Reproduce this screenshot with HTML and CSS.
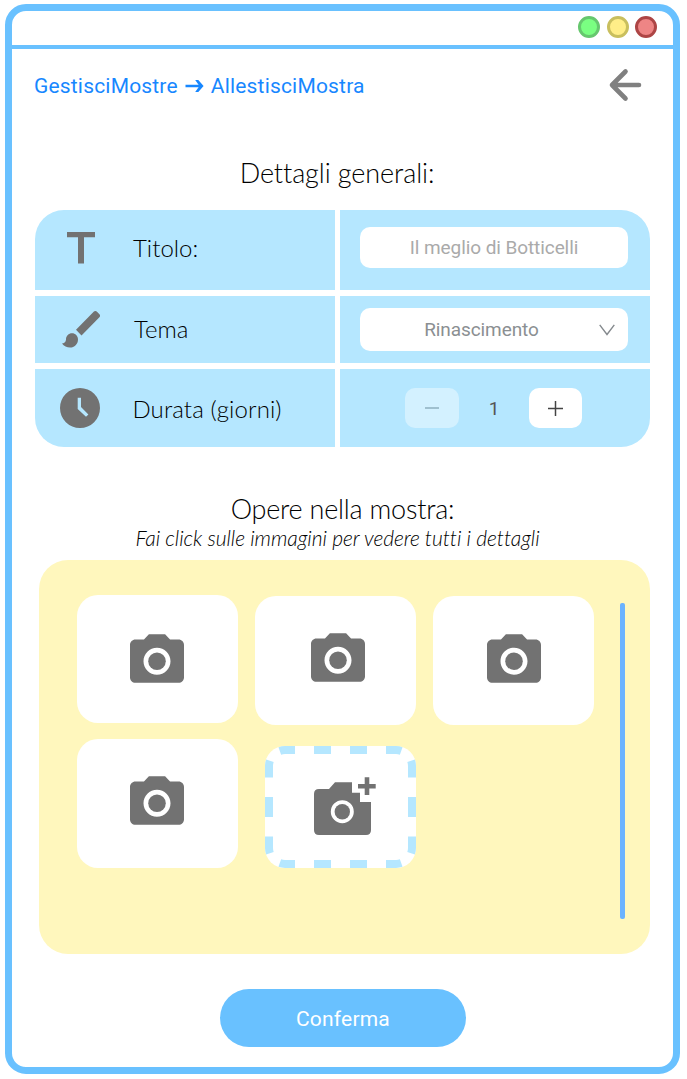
FILE: index.html
```html
<!DOCTYPE html>
<html lang="it">
<head>
<meta charset="utf-8">
<title>AllestisciMostra</title>
<link rel="stylesheet" href="styles.css">
</head>
<body>
<svg class="defs" width="0" height="0">
  <symbol id="camera" viewBox="2 2 20 18"><path fill-rule="evenodd" d="M9 2L7.17 4H4c-1.1 0-2 .9-2 2v12c0 1.1.9 2 2 2h16c1.1 0 2-.9 2-2V6c0-1.1-.9-2-2-2h-3.17L15 2H9zm3 15c-2.76 0-5-2.24-5-5s2.24-5 5-5 5 2.24 5 5-2.24 5-5 5z"/><circle cx="12" cy="12" r="3.25"/></symbol>
</svg>
<div class="window">
  <header class="titlebar">
    <span class="dot green"></span><span class="dot yellow"></span><span class="dot red"></span>
  </header>
  <main class="content">
    <nav class="topnav">
      <div class="crumbs">
        <a>GestisciMostre</a>
        <svg class="crumb-arrow" width="19" height="14" viewBox="0 0 19 14"><path d="M0.5 7H16" fill="none" stroke="currentColor" stroke-width="2.4"/><path d="M10.2 1H13.3L18.6 7L13.3 13H10.2L14.4 7z" fill="currentColor"/></svg>
        <a>AllestisciMostra</a>
      </div>
      <svg class="back" width="34" height="34" viewBox="0 0 34 34"><path d="M31 17H4M17.5 3.5L4 17L17.5 30.5" fill="none" stroke="#808080" stroke-width="4.6" stroke-linecap="round" stroke-linejoin="round"/></svg>
    </nav>
    <h1 class="heading general">Dettagli generali:</h1>
    <section class="details">
      <div class="cell label">
        <svg class="icon icon-title" width="28" height="32" viewBox="0 0 28 32"><path d="M0 0H28V5.3H17V31.5H11V5.3H0z"/></svg>
        <span class="name name-title">Titolo:</span>
      </div>
      <div class="cell first"><div class="field input">Il meglio di Botticelli</div></div>
      <div class="cell label">
        <svg class="icon icon-brush" width="38" height="37" viewBox="2 3 19 18.2" preserveAspectRatio="none"><path d="M7 14c-1.66 0-3 1.34-3 3 0 1.31-1.16 2-2 2 .92 1.22 2.49 2 4 2 2.21 0 4-1.79 4-4 0-1.66-1.34-3-3-3zm13.71-9.37l-1.34-1.34c-.39-.39-1.02-.39-1.41 0L9 12.25 11.75 15l8.96-8.96c.39-.39.39-1.02 0-1.41z"/></svg>
        <span class="name name-theme">Tema</span>
      </div>
      <div class="cell"><div class="field select"><span>Rinascimento</span>
        <svg class="chevron" width="16" height="12" viewBox="0 0 16 12"><path d="M0.7 0.8L8 10.5L15.3 0.8" fill="none" stroke="#858a8e" stroke-width="1.4"/></svg></div></div>
      <div class="cell label">
        <svg class="icon icon-clock" width="40" height="40" viewBox="0 0 40 40"><path fill-rule="evenodd" d="M20 0a20 20 0 1 0 0 40a20 20 0 1 0 0-40zM17.7 9.7H21V19L28.4 26.4L26 28.8L17.7 21z"/></svg>
        <span class="name name-days">Durata (giorni)</span>
      </div>
      <div class="cell stepper">
        <div class="step minus"><svg width="14" height="2"><path d="M0 1H14" stroke="#93b4c3" stroke-width="1.6"/></svg></div>
        <span class="count">1</span>
        <div class="step plus"><svg width="15" height="15"><path d="M0 7.5H15M7.5 0V15" stroke="#444" stroke-width="1.5"/></svg></div>
      </div>
    </section>
    <h2 class="heading works">Opere nella mostra:</h2>
    <p class="hint">Fai click sulle immagini per vedere tutti i dettagli</p>
    <section class="gallery">
      <div class="grid">
        <div class="card c1"><svg class="cam"><use href="#camera"/></svg></div>
        <div class="card c2"><svg class="cam"><use href="#camera"/></svg></div>
        <div class="card c3"><svg class="cam"><use href="#camera"/></svg></div>
        <div class="card c4"><svg class="cam"><use href="#camera"/></svg></div>
        <div class="add">
          <svg width="151" height="122" viewBox="0 0 151 122">
            <g fill="none" stroke="#b5e7ff" stroke-width="8">
              <path d="M14.8 4.9A16 16 0 0 1 20 4H30M49 4H66M85 4H102M121 4H131A16 16 0 0 1 136.2 4.9"/>
              <path d="M14.8 117.1A16 16 0 0 0 20 118H30M49 118H66M85 118H102M121 118H131A16 16 0 0 0 136.2 117.1"/>
              <path d="M4.9 14.8A16 16 0 0 0 4 20V31.5M4 51V71M4 90.5V102A16 16 0 0 0 4.9 107.2"/>
              <path d="M146.1 14.8A16 16 0 0 1 147 20V31.5M147 51V71M147 90.5V102A16 16 0 0 1 146.1 107.2"/>
            </g>
            <g transform="translate(49 31)" fill="#727272">
              <path fill-rule="evenodd" d="M5 12H15L21 5.3H38V15.7H46V25H57V53Q57 58 52 58H5Q0 58 0 53V17Q0 12 5 12zM28.3 23.2a11.5 11.5 0 1 0 0 23a11.5 11.5 0 1 0 0-23z"/>
              <circle cx="28.3" cy="34.7" r="7.7"/>
              <path d="M50.7 .3H55.3V7H61.7V11.6H55.3V18H50.7V11.6H44V7H50.7z"/>
            </g>
          </svg>
        </div>
      </div>
      <div class="scrollbar"></div>
    </section>
    <button class="confirm">Conferma</button>
  </main>
</div>
</body>
</html>
```
FILE: styles.css
```css
* { box-sizing: border-box; }
body { margin: 0; background: #fff; padding: 4px 7px 5px 5px; font-family: Roboto, sans-serif; font-variant-ligatures: none; }
svg { display: block; flex: none; }
.defs { position: absolute; }
.window { width: 675px; height: 1070px; border: 7px solid #69c1ff; border-radius: 21px; background: #fff; overflow: hidden; }
.titlebar { height: 38px; border-bottom: 4px solid #69c1ff; display: flex; justify-content: flex-end; gap: 6.5px; padding: 5.4px 16px 0 0; }
.dot { width: 22px; height: 22px; border-radius: 50%; border: 3px solid; }
.green { background: #7aff82; border-color: #66c76e; }
.yellow { background: #ffee88; border-color: #c9bf5e; }
.red { background: #ee8585; border-color: #ad4545; }
.content { display: flex; flex-direction: column; padding: 0 23px; }
.topnav { display: flex; justify-content: space-between; padding: 19px 8px 0 0; }
.crumbs { display: flex; align-items: center; height: 36px; margin-left: -1px; font-size: 21px; letter-spacing: 0.18px; color: #1787ff; white-space: nowrap; }
.crumb-arrow { margin: 0 7px 0 7px; }
.heading { margin: 0; font-family: Lato, sans-serif; font-weight: 300; font-size: 27px; line-height: 34px; color: #000; text-align: center; }
.general { margin-top: 52px; width: 604px; letter-spacing: -0.1px; }
.details { margin-top: 20px; width: 615px; height: 237px; display: grid; grid-template: 80px 67px 78px / 300px 310px; gap: 6px 5px; border-radius: 29px; overflow: hidden; }
.cell { background: #b5e7ff; padding-left: 20px; display: flex; align-items: center; }
.cell.first { align-items: flex-start; padding-top: 17px; }
.label { padding: 0; }
.icon { fill: #727272; }
.icon-title { margin: -5px 38px 0 32px; }
.icon-brush { margin: 0 34px 0 27px; }
.icon-clock { margin: 0 33px 0 24.5px; }
.name { font-family: Lato, sans-serif; font-weight: 300; font-size: 24px; line-height: 30px; white-space: nowrap; }
.name-title { margin-top: -4px; }
.name-theme { margin-top: -2px; }
.name-days { margin-top: 2px; letter-spacing: 0.1px; }
.field { width: 268px; border-radius: 10px; background: #fff; display: flex; align-items: center; justify-content: center; font-size: 19px; letter-spacing: -0.08px; white-space: nowrap; }
.input { height: 41px; color: #aaa; }
.select { height: 43px; color: #8b8f92; position: relative; padding-right: 25px; }
.chevron { position: absolute; right: 13px; top: 16px; }
.stepper { padding-left: 65px; }
.step { height: 40px; border-radius: 10px; display: flex; align-items: center; justify-content: center; }
.minus { width: 54px; background: #d3f1ff; }
.plus { width: 53px; background: #fff; }
.count { width: 70px; text-align: center; font-size: 19px; color: #555; }
.works { margin-top: 45px; width: 615px; letter-spacing: -0.22px; }
.hint { margin: 0; width: 605px; text-align: center; font-family: Lato, sans-serif; font-style: italic; font-weight: 300; font-size: 21px; line-height: 24px; letter-spacing: -0.05px; }
.gallery { margin: 10px 0 0 4px; width: 611px; height: 394px; border-radius: 29px; background: #fff7bd; padding: 35px 25px 35px 38px; display: flex; justify-content: space-between; }
.grid { display: grid; grid-template: 130px 129px / 161px 161px 161px; gap: 14px 17px; }
.card { background: #fff; border-radius: 21px; height: 129px; display: flex; justify-content: center; }
.cam { width: 54px; height: 49px; fill: #727272; }
.c1 { height: 128px; padding: 39px 1px 0 0; }
.c2 { margin-top: 1px; padding: 37px 0 0 5px; }
.c3 { margin-top: 1px; padding-top: 38px; }
.c4 { padding: 37px 1px 0 0; }
.add { width: 151px; height: 122px; margin: 7px 0 0 10px; border-radius: 20px; background: #fff; }
.scrollbar { width: 5px; height: 316px; margin-top: 8px; border-radius: 2px; background: #6bb3ff; }
.confirm { align-self: flex-start; margin: 35px 0 0 185px; width: 246px; height: 58px; padding: 2px 0 0; border: 0; border-radius: 29px; background: #69c1ff; color: #fff; font: 21px Roboto, sans-serif; letter-spacing: 0.2px; }
```
